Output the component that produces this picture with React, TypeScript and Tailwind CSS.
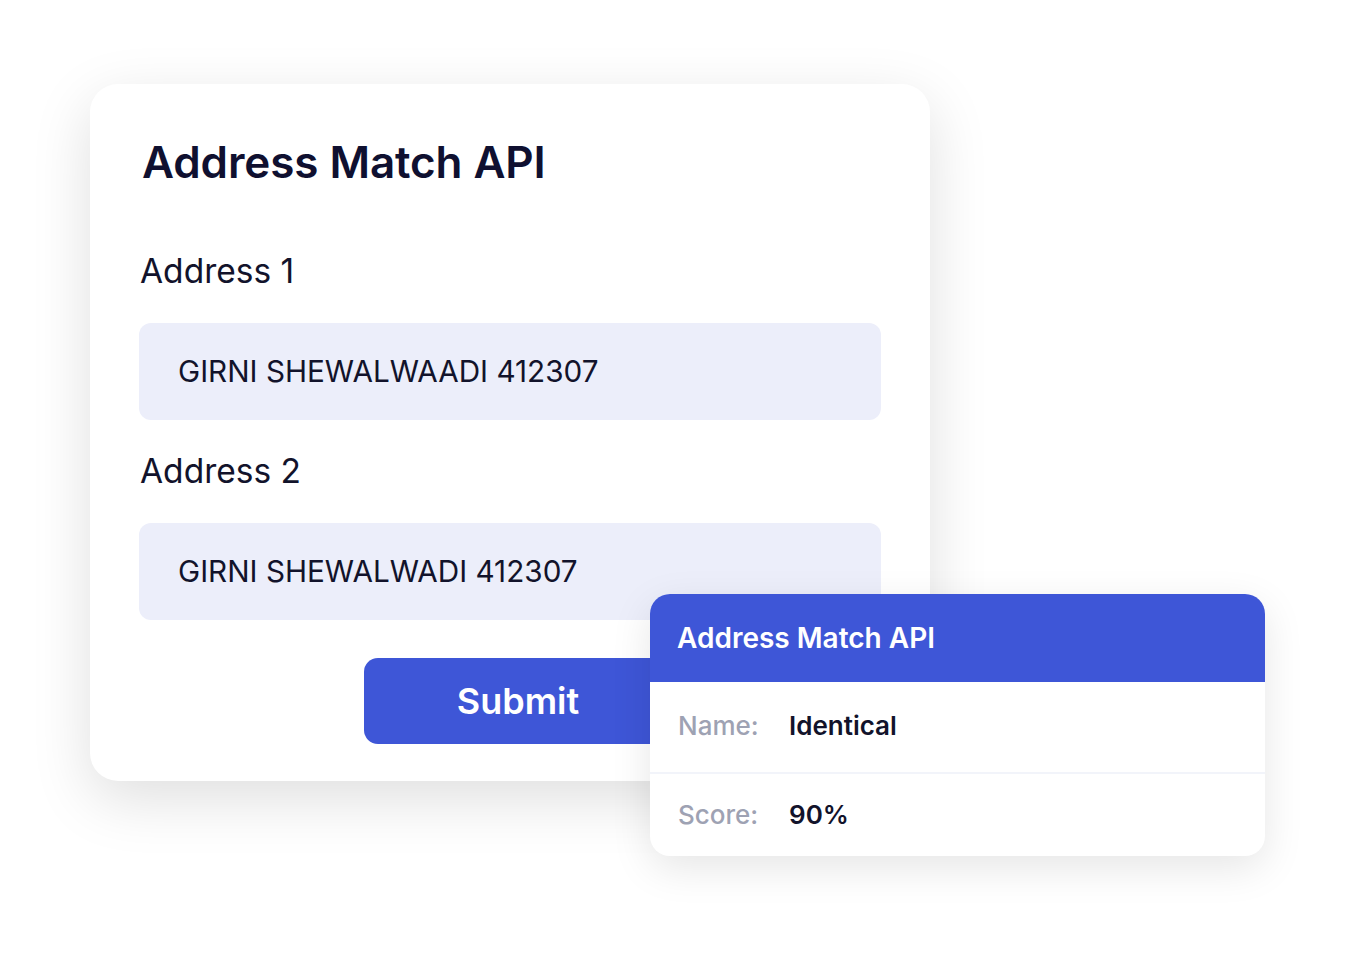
import React from "react";

export default function App() {
  return (
    <div className="relative w-[1355px] h-[954px] bg-white overflow-hidden" style={{ fontFamily: "Inter, 'Noto Sans', sans-serif" }}>
      <div className="ml-[90px] mt-[84px] w-[840px] h-[697px] rounded-[28px] bg-white pt-[52px] px-[49px] shadow-[0_18px_60px_rgba(0,0,0,0.13)] flex flex-col">
        <h1 className="pl-[3px] text-[44px] leading-[52px] font-semibold text-[#0f1030] tracking-[-0.1px]">Address Match API</h1>
        <div className="mt-[63px] pl-[1px] text-[33.5px] leading-[40px] text-[#12132b]">Address 1</div>
        <div className="mt-[32px] h-[97px] rounded-[12px] bg-[#eceefa] flex items-center pl-[39px] text-[29.7px] text-[#12132b]">GIRNI SHEWALWAADI 412307</div>
        <div className="mt-[31px] pl-[1px] text-[33.5px] leading-[40px] text-[#12132b]">Address 2</div>
        <div className="mt-[32px] h-[97px] rounded-[12px] bg-[#eceefa] flex items-center pl-[39px] text-[29.7px] text-[#12132b]">GIRNI SHEWALWADI 412307</div>
        <button className="mt-[38px] ml-[225px] w-[308px] h-[86px] rounded-[14px] bg-[#3e56d7] text-white text-[36px] font-semibold flex items-center justify-center">Submit</button>
      </div>
      <div className="absolute left-[650px] top-[594px] w-[615px] h-[262px] rounded-[20px] bg-white shadow-[0_12px_40px_rgba(0,0,0,0.1)] overflow-hidden flex flex-col">
        <div className="h-[88px] bg-[#3e56d7] flex items-center pl-[27px] text-white text-[28px] font-semibold">Address Match API</div>
        <div className="h-[92px] border-b-2 border-[#f2f4fa] flex items-center pl-[28px] pb-[4px] text-[26px]">
          <span className="w-[111px] text-[#9ea2b3] font-medium">Name:</span>
          <span className="text-[#12132b] font-semibold">Identical</span>
        </div>
        <div className="flex-1 flex items-center pl-[28px] pb-[2px] text-[26px]">
          <span className="w-[111px] text-[#9ea2b3] font-medium">Score:</span>
          <span className="text-[#12132b] font-semibold">90%</span>
        </div>
      </div>
    </div>
  );
}
